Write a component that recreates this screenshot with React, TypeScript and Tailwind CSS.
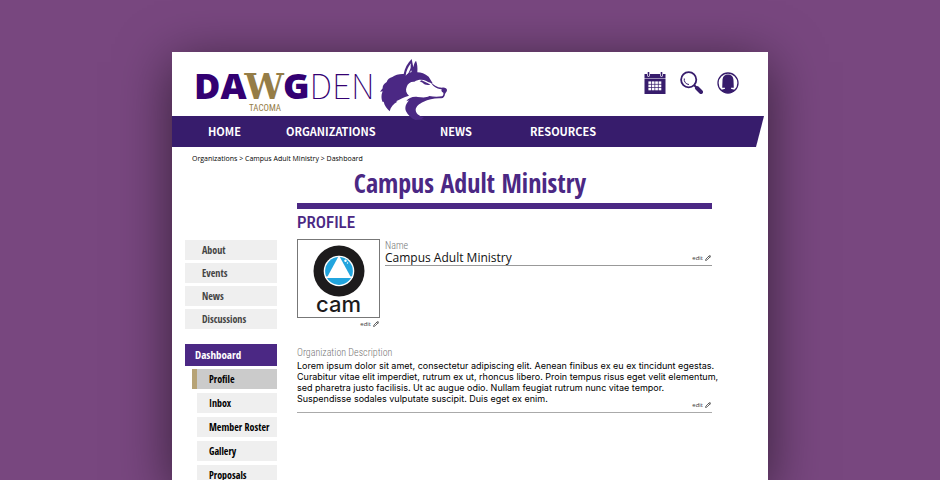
import { Pencil } from "lucide-react";

const navItems = [
  { label: "HOME", cls: "ml-9 w-[78px]" },
  { label: "ORGANIZATIONS", cls: "w-[154px]" },
  { label: "NEWS", cls: "w-[90px]" },
  { label: "RESOURCES", cls: "" },
];
const orgLinks = ["About", "Events", "News", "Discussions"];
const dashLinks = ["Inbox", "Member Roster", "Gallery", "Proposals"];
const description = [
  "Lorem ipsum dolor sit amet, consectetur adipiscing elit. Aenean finibus ex eu ex tincidunt egestas.",
  "Curabitur vitae elit imperdiet, rutrum ex ut, rhoncus libero. Proin tempus risus eget velit elementum,",
  "sed pharetra justo facilisis. Ut ac augue odio. Nullam feugiat rutrum nunc vitae tempor.",
  "Suspendisse sodales vulputate suscipit. Duis eget ex enim.",
];

function Husky() {
  return (
    <svg viewBox="0 0 228 198" className="absolute top-1 left-[204px] h-[66px] w-[76px]" aria-hidden="true">
      <path
        fill="#4b2884"
        d="M107 9C95 21 86 37 83 54C70 53 58 57 49 63C41 65 34 71 32 78C23 83 19 91 20 97L12 107L20 106C14 120 17 132 20 138L23 137C25 149 33 158 41 166C44 153 52 143 64 137L60 136C71 130 82 124 99 119C90 112 88 102 92 93C95 82 104 76 115 77C127 70 140 70 151 75C158 79 164 81 170 82L158 62C147 53 135 49 124 49C125 35 124 23 120 14C115 20 113 28 112 34Z"
      />
      <path fill="#fff" d="M105 22C96 33 91 44 89 59C94 53 100 49 107 48C104 39 103 31 105 22Z" />
      <path fill="#4b2884" d="M106 32L95 56L100 52C105 45 107 40 106 32Z" />
      <path fill="#4b2884" d="M137 73C145 78 153 79 163 86C153 88 145 86 140 80L131 76Z" />
      <path
        fill="#4b2884"
        d="M162 74C171 87 183 94 198 95C205 93 213 97 213 102C213 107 209 110 207 114C206 122 202 128 194 127C175 126 157 131 143 137C129 143 120 151 119 161C119 172 129 180 144 184L137 188L146 190L118 192C105 187 96 177 90 166C85 153 91 142 99 133L91 136C97 126 110 121 125 123C139 124 150 126 160 120C173 123 186 123 198 121C202 119 203 114 202 110C197 109 195 104 197 100C180 98 169 90 162 74Z"
      />
    </svg>
  );
}

function CalendarIcon() {
  const cells = [0, 1, 2, 3];
  return (
    <svg viewBox="0 0 22 22" className="h-[22px] w-[22px]" aria-hidden="true">
      <path fill="#371c6c" d="M0.500 2h2.500v2q1.500 1.500 3 0V2h10v2q1.500 1.500 3 0V2h2.500v4.500h-21zM0.500 7h21V22h-21z" />
      <path fill="#371c6c" d="M3.700 0h1.600v4H3.700zM16.700 0h1.600v4h-1.600z" />
      {cells.map((c) =>
        [0, 1, 2].map((r) => (
          <rect key={`${c}-${r}`} x={4.4 + c * 3.4} y={9.4 + r * 3.2} width="2.700" height="2.500" fill="#fff" />
        )),
      )}
    </svg>
  );
}

function SearchIcon() {
  return (
    <svg viewBox="0 0 23 23" className="h-[23px] w-[23px]" fill="none" stroke="#371c6c" aria-hidden="true">
      <circle cx="8.700" cy="8.700" r="7.600" strokeWidth="1.800" />
      <path d="M4.300 7.500A5 5 0 0 0 9 13.500" strokeWidth="1" />
      <path d="M14 14l3 3" strokeWidth="2" />
      <path d="M17 17l4 4" strokeWidth="4" strokeLinecap="round" />
    </svg>
  );
}

function UserIcon() {
  return (
    <svg viewBox="0 0 22 22" className="h-[22px] w-[22px]" aria-hidden="true">
      <circle cx="11" cy="11" r="10" fill="none" stroke="#371c6c" strokeWidth="1.300" />
      <path
        fill="#371c6c"
        d="M11 2.500c3.800 0 5.500 2.600 5.500 6l.3 7.200H14v1l4.200 1.400C16.200 20.300 13.800 21 11 21s-5.200-.7-7.200-2.900L8 16.700v-1H5.200L5.500 8.500c0-3.400 1.700-6 5.500-6z"
      />
    </svg>
  );
}

function CamLogo() {
  return (
    <svg viewBox="0 0 52 52" className="h-[52px] w-[52px]" aria-hidden="true">
      <circle cx="26" cy="26" r="25.500" fill="#1d1b1c" />
      <circle cx="26" cy="26" r="15.300" fill="#fff" />
      <circle cx="26" cy="26" r="13.900" fill="#22a5de" />
      <path fill="#fff" d="M26 10.500L38 32.500H14z" />
      <path fill="#fff" d="M12 31.500h28v1.500H12z" />
      <circle cx="32.500" cy="15.800" r="1.200" fill="#fff" />
      <circle cx="34.500" cy="18" r=".7" fill="#fff" />
    </svg>
  );
}

function EditButton() {
  return (
    <button type="button" className="flex items-center gap-0.5 pr-px text-[6px] leading-2 text-[#333]">
      edit
      <Pencil className="size-[6px]" strokeWidth={3} />
    </button>
  );
}

export default function App() {
  return (
    <div className="h-screen overflow-hidden bg-[#78477f] pt-13 font-['Open_Sans',sans-serif]">
      <div className="mx-auto min-h-full w-full max-w-[596px] bg-white shadow-[0_10px_50px_rgba(0,0,0,0.55)]">
        <header className="relative z-10 flex h-16 items-start justify-between pr-[29px] pl-[22px]">
          <a href="#home" className="block pt-4" aria-label="Dawg Den Tacoma">
            <span className="flex items-baseline leading-[34px] text-[#330072]">
              <span className="text-[36px] font-extrabold">DA</span>
              <span className="-ml-0.5 font-['DejaVu_Serif',serif] text-[35px] font-bold text-[#957d47]">W</span>
              <span className="-ml-px text-[36px] font-extrabold">G</span>
              <span className="font-['Noto_Sans_CJK_SC',sans-serif] text-[34px] font-thin">DEN</span>
            </span>
            <span className="ml-[55px] block font-['Roboto_Condensed',sans-serif] text-[9px] leading-[9px] text-[#957d47]">
              TACOMA
            </span>
          </a>
          <Husky />
          <div className="flex gap-3.5 pt-[19px]">
            <button type="button" aria-label="Calendar"><CalendarIcon /></button>
            <button type="button" aria-label="Search"><SearchIcon /></button>
            <button type="button" aria-label="Account"><UserIcon /></button>
          </div>
        </header>

        <nav className="mr-1 flex h-[31px] items-center bg-[#371c6c] pb-px font-['Noto_Sans_CJK_SC',sans-serif] text-[11px] leading-4 font-bold text-white [clip-path:polygon(0_0,100%_0,calc(100%-8px)_100%,0_100%)]">
          {navItems.map((n) => (
            <a key={n.label} href="#" className={n.cls}>{n.label}</a>
          ))}
        </nav>

        <div className="px-5 pt-2 text-[7px] leading-2 text-black">
          <a href="#">Organizations</a> &gt; <a href="#">Campus Adult Ministry</a> &gt; <a href="#">Dashboard</a>
        </div>
        <h1 className="mt-1.5 text-center font-['Open_Sans_Condensed',sans-serif] text-[26px] leading-[28px] font-bold text-[#4b2884]">
          Campus Adult Ministry
        </h1>

        <div className="mt-1.5 flex gap-5 pr-14 pl-[13px]">
          <aside className="w-[92px] shrink-0 pt-[37px] font-['Open_Sans_Condensed',sans-serif] text-[10px] font-bold">
            <ul className="space-y-[3px] leading-5 text-[#444]">
              {orgLinks.map((l) => (
                <li key={l}>
                  <a href="#" className="block bg-[#efefef] pl-[17px]">{l}</a>
                </li>
              ))}
            </ul>
            <a href="#" className="mt-[15px] block bg-[#4b2884] pl-2.5 text-[11px] leading-[22px] text-white">Dashboard</a>
            <ul className="mt-[3px] space-y-1 leading-5 text-black">
              <li className="pl-[7px]">
                <a href="#" className="block border-l-5 border-[#b7a376] bg-[#cbcbcb] pl-3">Profile</a>
              </li>
              {dashLinks.map((l) => (
                <li key={l} className="pl-3">
                  <a href="#" className="block bg-[#efefef] pl-3">{l}</a>
                </li>
              ))}
            </ul>
          </aside>

          <main className="min-w-0 flex-1">
            <div className="h-1.5 bg-[#4b2884]" />
            <h2 className="mt-[3px] font-['Roboto_Condensed',sans-serif] text-[17px] leading-5 font-medium text-[#4b2884]">
              PROFILE
            </h2>
            <div className="mt-[7px] flex gap-[5px]">
              <div className="w-[83px] shrink-0">
                <div className="flex h-[79px] flex-col items-center border border-[#777] pt-[5px]">
                  <CamLogo />
                  <span className="font-['Inter',sans-serif] text-[22px] leading-[14px] font-medium text-[#1d1b1c]">cam</span>
                </div>
                <div className="mt-0.5 flex justify-end">
                  <EditButton />
                </div>
              </div>
              <section className="flex-1">
                <h3 className="mt-0.5 font-['Roboto_Condensed',sans-serif] text-[10px] leading-[10px] font-light text-[#777]">Name</h3>
                <div className="flex items-center justify-between border-b border-[#999]">
                  <p className="text-[12px] leading-[14px] text-[#111]">Campus Adult Ministry</p>
                  <EditButton />
                </div>
              </section>
            </div>

            <section className="mt-5 border-b border-[#aaa]">
              <h3 className="font-['Roboto_Condensed',sans-serif] text-[10px] leading-[10px] font-light text-[#777]">
                Organization Description
              </h3>
              <p className="mt-0.5 font-['Inter',sans-serif] text-[9px] leading-[11px] text-black">
                {description.map((line) => (
                  <span key={line} className="block whitespace-nowrap">{line}</span>
                ))}
              </p>
              <div className="-mt-[3px] mb-[3px] flex justify-end">
                <EditButton />
              </div>
            </section>
          </main>
        </div>
      </div>
    </div>
  );
}
